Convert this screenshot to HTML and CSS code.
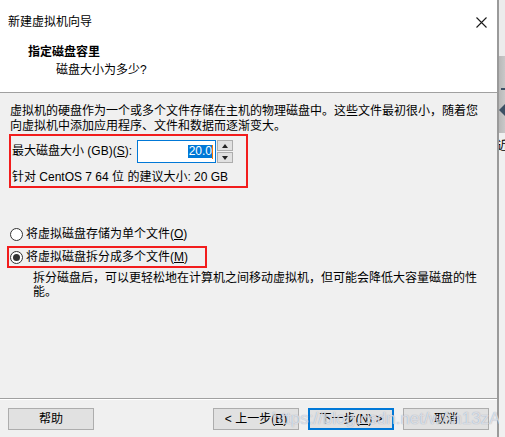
FILE: index.html
```html
<!DOCTYPE html>
<html lang="zh">
<head>
<meta charset="utf-8">
<title>新建虚拟机向导</title>
<link rel="stylesheet" href="styles.css">
</head>
<body>
<div class="screen">
  <div class="dialog">
    <div class="titlebar">
      <span class="title">新建虚拟机向导</span>
      <svg class="close" width="11" height="11" viewBox="0 0 11 11"><path d="M0.5 0.5 L10.5 10.5 M10.5 0.5 L0.5 10.5" stroke="#1a1a1a" stroke-width="1.1" fill="none"/></svg>
    </div>
    <div class="header">
      <div class="h-title">指定磁盘容里</div>
      <div class="h-sub">磁盘大小为多少?</div>
    </div>
    <div class="content">
      <p class="intro">虚拟机的硬盘作为一个或多个文件存储在主机的物理磁盘中。这些文件最初很小，随着您<br>向虚拟机中添加应用程序、文件和数据而逐渐变大。</p>
      <div class="redbox sizebox">
        <div class="size-row">
          <span class="size-label">最大磁盘大小 (GB)(<u>S</u>):</span>
          <div class="input"><span class="sel">20.0</span><span class="caret"></span></div>
          <div class="spin">
            <div class="spin-btn"><span class="tri up"></span></div>
            <div class="spin-btn"><span class="tri down"></span></div>
          </div>
        </div>
        <div class="recommend">针对 CentOS 7 64 位 的建议大小: 20 GB</div>
      </div>
      <div class="radio-row first">
        <span class="radio"></span>
        <span class="radio-text">将虚拟磁盘存储为单个文件(<u>O</u>)</span>
      </div>
      <div class="radio-row redbox second">
        <span class="radio checked"></span>
        <span class="radio-text">将虚拟磁盘拆分成多个文件(<u>M</u>)</span>
      </div>
      <p class="desc">拆分磁盘后，可以更轻松地在计算机之间移动虚拟机，但可能会降低大容量磁盘的性<br>能。</p>
    </div>
    <div class="footer">
      <div class="btn">帮助</div>
      <div class="btn-group">
        <div class="btn">&lt; 上一步(<u>B</u>)</div>
        <div class="btn default">下一步(<u>N</u>) &gt;</div>
        <div class="btn">取消</div>
      </div>
    </div>
    <div class="watermark">https://blog.csdn.net/wAn13zA</div>
  </div>
  <div class="strip">
    <div class="strip-top"></div>
    <div class="strip-mid">
      <span class="dash"></span>
      <span class="arrow"></span>
    </div>
    <div class="strip-low"><span class="near">近</span></div>
  </div>
</div>
</body>
</html>
```
FILE: styles.css
```css
* { box-sizing: border-box; }
html, body { margin: 0; padding: 0; }
body {
  width: 505px;
  height: 437px;
  overflow: hidden;
  background: #f0f0f0;
  font-family: "Liberation Sans", "Noto Sans CJK SC", sans-serif;
  font-size: 12px;
  color: #000;
}
u { text-decoration: underline; text-underline-offset: 1px; }
.screen { display: flex; height: 437px; }
.dialog {
  position: relative;
  width: 499px;
  height: 437px;
  border-right: 2px solid #9a9a9a;
  background: #f0f0f0;
  display: flex;
  flex-direction: column;
  flex-shrink: 0;
}
.titlebar {
  height: 44px;
  background: #fff;
  display: flex;
  align-items: center;
  justify-content: space-between;
  padding: 0 10px 0 8px;
}
.title { line-height: 16px; }
.close { display: block; }
.header {
  height: 49px;
  background: #fff;
  border-bottom: 1px solid #a0a0a0;
  padding: 0 0 0 28px;
}
.h-title { font-weight: bold; line-height: 16px; }
.h-sub { line-height: 16px; margin-top: 2px; padding-left: 28px; }
.content {
  flex: 1;
  padding: 11px 8px 0 8px;
}
.intro { margin: 0; line-height: 15px; padding-left: 2px; white-space: nowrap; }
.redbox { border: 2px solid #f21c1c; }
.sizebox {
  width: 239px;
  margin: 0 0 0 1px;
  padding: 4px 0 1px 1px;
}
.size-row { display: flex; align-items: stretch; height: 23px; }
.size-label { width: 125px; line-height: 23px; }
.input {
  width: 79px;
  height: 23px;
  background: #fff;
  border: 1px solid #0078d7;
  display: flex;
  align-items: center;
  justify-content: flex-end;
  padding-right: 2px;
}
.sel {
  background: #0078d7;
  color: #fff;
  line-height: 13px;
  height: 13px;
  padding: 0 0 0 1px;
}
.caret { width: 1px; height: 14px; background: #f07800; }
.spin {
  width: 16px;
  height: 23px;
  margin-left: 1px;
  display: flex;
  flex-direction: column;
  gap: 1px;
}
.spin-btn {
  flex: 1;
  background: #e1e1e1;
  border: 1px solid #adadad;
  display: flex;
  align-items: center;
  justify-content: center;
}
.tri { width: 0; height: 0; border-left: 3px solid transparent; border-right: 3px solid transparent; }
.tri.up { border-bottom: 4px solid #222; }
.tri.down { border-top: 4px solid #222; }
.recommend { margin-top: 6px; line-height: 16px; }
.radio-row { display: flex; align-items: center; height: 18px; }
.radio-row.first { margin-top: 37px; padding-left: 2px; }
.radio-row.second {
  margin: 3px 0 0 -1px;
  width: 200px;
  height: 22px;
  padding-left: 1px;
}
.radio {
  width: 13px;
  height: 13px;
  border-radius: 50%;
  border: 1px solid #333;
  background: #fff;
  display: flex;
  align-items: center;
  justify-content: center;
  flex-shrink: 0;
}
.radio.checked::after {
  content: "";
  width: 7px;
  height: 7px;
  border-radius: 50%;
  background: #333;
}
.radio-text { margin-left: 3px; line-height: 16px; }
.desc {
  margin: 3px 0 0 0;
  padding-left: 25px;
  white-space: nowrap;
  line-height: 14px;
}
.footer {
  height: 39px;
  border-top: 1px solid #a0a0a0;
  box-shadow: inset 0 1px 0 #fff;
  padding: 9px 8px 7px 8px;
  display: flex;
  justify-content: space-between;
  align-items: flex-start;
}
.btn-group { display: flex; gap: 9px; }
.btn {
  width: 86px;
  height: 22px;
  background: #e1e1e1;
  border: 1px solid #adadad;
  display: flex;
  align-items: center;
  justify-content: center;
  line-height: 16px;
}
.btn.default { border: 2px solid #0078d7; }
.watermark {
  position: absolute;
  left: 272px;
  top: 409px;
  font-size: 17px;
  line-height: 20px;
  color: rgba(255, 255, 255, 0.65);
  text-shadow: 0 0 1px rgba(100, 115, 150, 0.7);
  pointer-events: none;
  white-space: nowrap;
}
.strip { flex: 1; display: flex; flex-direction: column; overflow: hidden; }
.strip-top { height: 56px; background: #ececec; }
.strip-mid {
  height: 77px;
  background: linear-gradient(90deg, #b8b8b8, #c8c8c8);
  position: relative;
}
.dash { position: absolute; left: 2px; top: 32px; width: 6px; height: 2px; background: #3c5064; }
.arrow {
  position: absolute;
  left: 0;
  top: 48px;
  width: 0; height: 0;
  border-top: 6px solid transparent;
  border-bottom: 6px solid transparent;
  border-right: 6px solid #3c5064;
}
.strip-low { flex: 1; background: #f0f0f0; position: relative; }
.near {
  position: absolute;
  left: -2px;
  top: 4px;
  font-family: "Noto Sans CJK SC", sans-serif;
  font-size: 12px;
  line-height: 16px;
}
```
